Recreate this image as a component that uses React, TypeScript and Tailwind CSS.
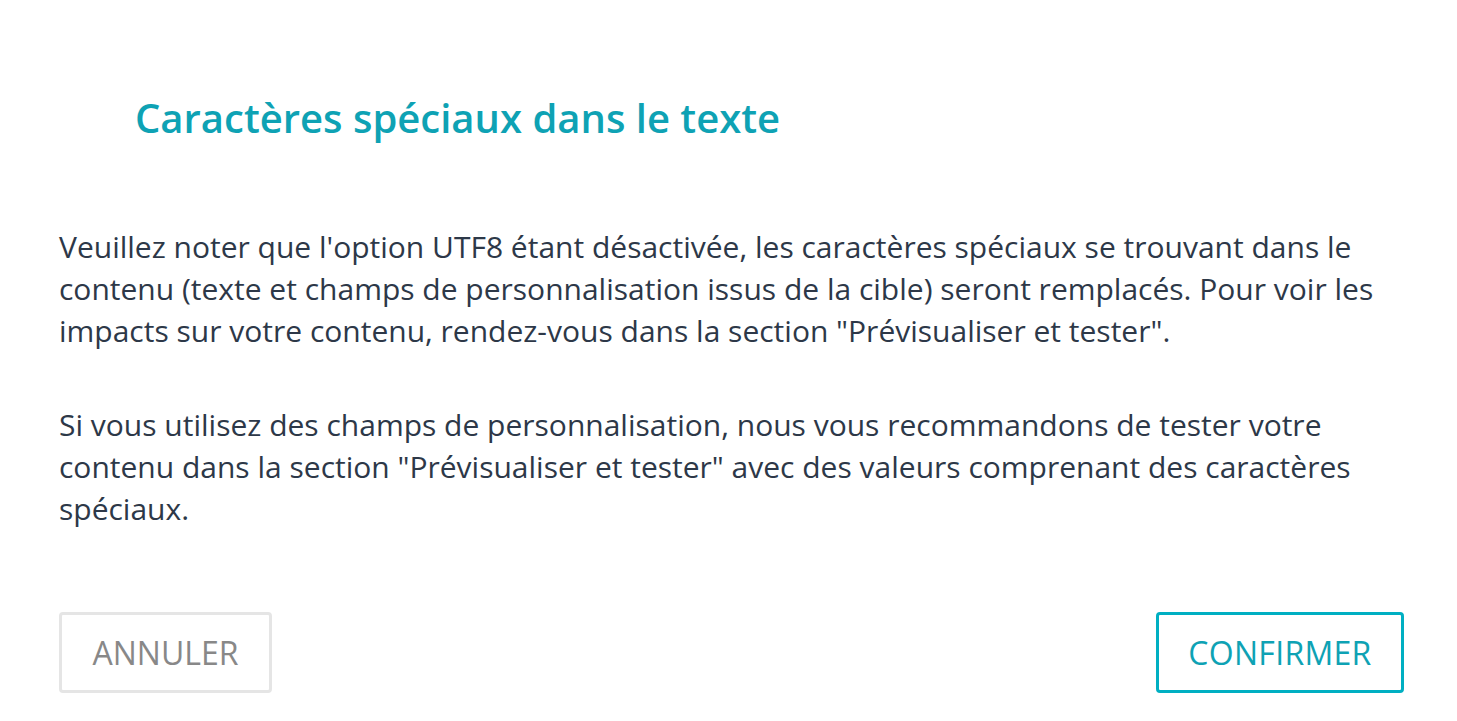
export default function App() {
  return (
    <div className="w-[1457px] h-[721px] bg-white overflow-hidden" style={{ fontFamily: '"Open Sans", sans-serif' }}>
      <div className="pt-[94px] pl-[59px] pr-[53px]">
        <h1 className="pl-[76px] text-[40px] leading-[48px] font-semibold text-[#0ea2b4]">Caractères spéciaux dans le texte</h1>
        <p className="mt-[84px] pr-[1px] text-[30px] leading-[42px] text-[#2d3848]">
          Veuillez noter que l'option UTF8 étant désactivée, les caractères spéciaux se trouvant dans le contenu (texte et champs de personnalisation issus de la cible) seront remplacés. Pour voir les impacts sur votre contenu, rendez-vous dans la section "Prévisualiser et tester".
        </p>
        <p className="mt-[52px] pr-[1px] text-[30px] leading-[42px] text-[#2d3848]">
          Si vous utilisez des champs de personnalisation, nous vous recommandons de tester votre contenu dans la section "Prévisualiser et tester" avec des valeurs comprenant des caractères spéciaux.
        </p>
        <div className="mt-[82px] flex justify-between">
          <button className="w-[213px] h-[81px] border-[3px] border-[#e5e5e5] rounded-[4px] text-[32px] text-[#888888] uppercase">Annuler</button>
          <button className="w-[248px] h-[81px] border-[3px] border-[#00afc2] rounded-[4px] text-[32px] tracking-[0.3px] text-[#0ea2b4] uppercase">Confirmer</button>
        </div>
      </div>
    </div>
  );
}
